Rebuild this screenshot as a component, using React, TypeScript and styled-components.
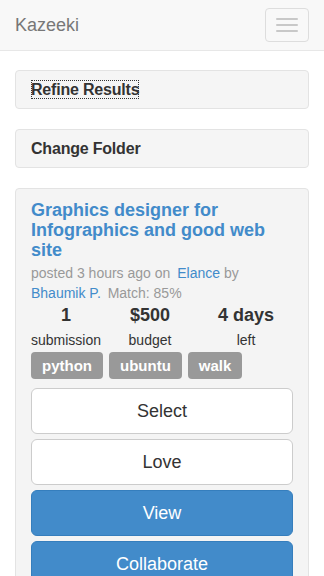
import React from "react";
import styled, { createGlobalStyle } from "styled-components";

const GlobalStyle = createGlobalStyle`
  * {
    box-sizing: border-box;
  }
  body {
    margin: 0;
    font-family: "Liberation Sans", Arial, sans-serif;
    font-size: 14px;
    line-height: 20px;
    color: #333;
    background: #fff;
  }
`;

const tags = ["python", "ubuntu", "walk"];

const stats = [
  { value: "1", label: "submission" },
  { value: "$500", label: "budget" },
  { value: "4 days", label: "left" },
];

const actions = [
  { text: "Select", primary: false },
  { text: "Love", primary: false },
  { text: "View", primary: true },
  { text: "Collaborate", primary: true },
];

const App: React.FC = () => {
  return (
    <>
      <GlobalStyle />
      <Navbar>
        <Brand>Kazeeki</Brand>
        <Toggle aria-label="menu">
          <Bar />
          <Bar />
          <Bar />
        </Toggle>
      </Navbar>
      <Page>
        <Panel>
          <PanelLink $focused>Refine Results</PanelLink>
        </Panel>
        <Panel>
          <PanelLink>Change Folder</PanelLink>
        </Panel>
        <Card>
          <Title>Graphics designer for Infographics and good web site</Title>
          <Meta>
            posted 3 hours ago on <Link>Elance</Link> by <Link>Bhaumik P.</Link>{" "}
            Match: 85%
          </Meta>
          <Stats>
            {stats.map((s) => (
              <Stat key={s.label}>
                <StatValue>{s.value}</StatValue>
                <StatLabel>{s.label}</StatLabel>
              </Stat>
            ))}
          </Stats>
          <Tags>
            {tags.map((t) => (
              <Tag key={t}>{t}</Tag>
            ))}
          </Tags>
          <Actions>
            {actions.map((a) => (
              <Button key={a.text} $primary={a.primary}>
                {a.text}
              </Button>
            ))}
          </Actions>
        </Card>
      </Page>
    </>
  );
};

export default App;

const Navbar = styled.div`
  height: 51px;
  background-color: #f8f8f8;
  border-bottom: 1px solid #e7e7e7;
  display: flex;
  align-items: center;
  justify-content: space-between;
  padding: 0 15px;
`;

const Brand = styled.div`
  font-size: 18px;
  line-height: 20px;
  color: #777;
`;

const Toggle = styled.button`
  width: 44px;
  height: 34px;
  border: 1px solid #ddd;
  border-radius: 4px;
  background: transparent;
  display: flex;
  flex-direction: column;
  align-items: center;
  justify-content: center;
  gap: 4px;
  padding: 0;
  margin-top: -1px;
`;

const Bar = styled.span`
  display: block;
  width: 22px;
  height: 2px;
  border-radius: 1px;
  background-color: #c8c8c8;
`;

const Page = styled.div`
  padding: 19px 15px 0;
  display: flex;
  flex-direction: column;
  gap: 20px;
`;

const Panel = styled.div`
  background-color: #f5f5f5;
  border: 1px solid #e3e3e3;
  border-radius: 4px;
  padding: 9px 15px;
  height: 39px;
`;

const PanelLink = styled.span<{ $focused?: boolean }>`
  display: inline-block;
  font-size: 16px;
  font-weight: bold;
  line-height: 19px;
  color: #333;
  outline: ${(p) => (p.$focused ? "1px dotted #333" : "none")};
  outline-offset: -1px;
  letter-spacing: -0.2px;
`;

const Card = styled.div`
  background-color: #f4f4f4;
  border: 1px solid #e3e3e3;
  border-radius: 4px;
  padding: 11px 15px 20px;
`;

const Title = styled.h4`
  margin: 0;
  font-size: 18px;
  line-height: 20px;
  font-weight: bold;
  color: #428bca;
`;

const Meta = styled.div`
  margin-top: 3px;
  color: #999;
  font-size: 14px;
  line-height: 20px;
`;

const Link = styled.span`
  color: #428bca;
  margin-left: 3px;

  &:nth-of-type(2) {
    margin-left: 0;
    margin-right: 3px;
  }
`;

const Stats = styled.div`
  display: grid;
  grid-template-columns: 70px 98px 1fr;
  text-align: center;
  margin-top: -1px;
`;

const Stat = styled.div`
  display: flex;
  flex-direction: column;
`;

const StatValue = styled.div`
  font-size: 18px;
  font-weight: bold;
  line-height: 26px;
  color: #333;
`;

const StatLabel = styled.div`
  font-size: 14px;
  line-height: 20px;
  margin-top: 2px;
  color: #333;
`;

const Tags = styled.div`
  display: flex;
  gap: 6px;
  margin-top: 2px;
`;

const Tag = styled.span`
  background-color: #999;
  color: #fff;
  font-size: 15px;
  font-weight: bold;
  line-height: 19px;
  padding: 4px 11px;
  border-radius: 4px;
`;

const Actions = styled.div`
  display: flex;
  flex-direction: column;
  gap: 5px;
  margin-top: 9px;
`;

const Button = styled.button<{ $primary: boolean }>`
  height: 46px;
  width: 100%;
  font-family: "Liberation Sans", Arial, sans-serif;
  font-size: 18px;
  border-radius: 6px;
  border: 1px solid ${(p) => (p.$primary ? "#357ebd" : "#ccc")};
  background-color: ${(p) => (p.$primary ? "#428bca" : "#fff")};
  color: ${(p) => (p.$primary ? "#fff" : "#333")};
  padding: 0 16px;
`;
